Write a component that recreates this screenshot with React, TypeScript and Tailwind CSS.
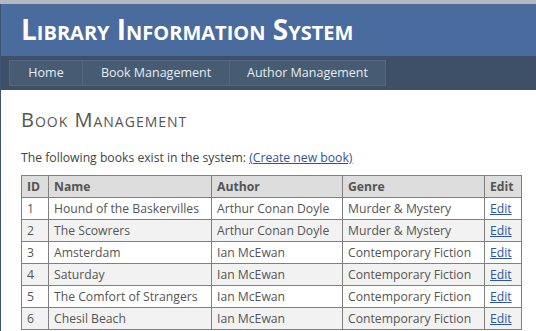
import React from "react";

const books = [
  { id: 1, name: "Hound of the Baskervilles", author: "Arthur Conan Doyle", genre: "Murder & Mystery" },
  { id: 2, name: "The Scowrers", author: "Arthur Conan Doyle", genre: "Murder & Mystery" },
  { id: 3, name: "Amsterdam", author: "Ian McEwan", genre: "Contemporary Fiction" },
  { id: 4, name: "Saturday", author: "Ian McEwan", genre: "Contemporary Fiction" },
  { id: 5, name: "The Comfort of Strangers", author: "Ian McEwan", genre: "Contemporary Fiction" },
  { id: 6, name: "Chesil Beach", author: "Ian McEwan", genre: "Contemporary Fiction" },
];

const cell = "border border-[#808080] px-[5px] py-0 whitespace-nowrap overflow-hidden";

export default function App() {
  return (
    <div className="w-[536px] h-[331px] overflow-hidden bg-[#b5b8bc] pt-[4px] font-['Open_Sans',sans-serif]">
      <div className="h-full border-l border-[#3b5573] bg-white">
        <header className="h-[52px] bg-[#4a6b9d] pl-[20px] flex items-center">
          <h1 className="text-white font-bold text-[28px] leading-none [font-variant:small-caps] tracking-[0px] pb-[2px] whitespace-nowrap">
            Library Information System
          </h1>
        </header>
        <nav className="h-[34px] bg-[#3d5068] pt-[4px] pl-[8px]">
          <ul className="flex h-[26px]">
            <li className="w-[74px] h-full bg-[#475c72] border border-[#526780] flex items-center justify-center text-[#e6ecf3] text-[12.5px]">Home</li>
            <li className="w-[147px] h-full bg-[#475c72] border border-l-0 border-[#526780] flex items-center justify-center text-[#e6ecf3] text-[12.5px]">Book Management</li>
            <li className="w-[156px] h-full bg-[#475c72] border border-l-0 border-[#526780] flex items-center justify-center text-[#e6ecf3] text-[12.5px]">Author Management</li>
          </ul>
        </nav>
        <main className="pl-[20px] pt-[20px]">
          <h2 className="text-[#555] text-[20px] leading-none [font-variant:small-caps] font-normal tracking-[1px] whitespace-nowrap">Book Management</h2>
          <p className="mt-[22px] text-[12.2px] text-[#444] leading-none whitespace-nowrap">
            The following books exist in the system:{" "}
            <a className="text-[#2b54a8] underline" href="#">(Create new book)</a>
          </p>
          <table className="mt-[11px] border-collapse table-fixed w-[500px] text-[12.2px] text-[#555] border border-[#808080]">
            <colgroup>
              <col className="w-[27px]" />
              <col className="w-[163px]" />
              <col className="w-[131px]" />
              <col className="w-[142px]" />
              <col className="w-[37px]" />
            </colgroup>
            <thead>
              <tr className="bg-[#dddddd] h-[22px]">
                <th className={`${cell} text-left font-bold`}>ID</th>
                <th className={`${cell} text-left font-bold`}>Name</th>
                <th className={`${cell} text-left font-bold`}>Author</th>
                <th className={`${cell} text-left font-bold`}>Genre</th>
                <th className={`${cell} text-left font-bold`}>Edit</th>
              </tr>
            </thead>
            <tbody>
              {books.map((b, i) => (
                <tr key={b.id} className={`h-[22px] ${i % 2 === 1 ? "bg-[#f2f2f2]" : "bg-white"}`}>
                  <td className={cell}>{b.id}</td>
                  <td className={cell}>{b.name}</td>
                  <td className={cell}>{b.author}</td>
                  <td className={cell}>{b.genre}</td>
                  <td className={cell}>
                    <a className="text-[#2b54a8] underline" href="#">Edit</a>
                  </td>
                </tr>
              ))}
            </tbody>
          </table>
        </main>
      </div>
    </div>
  );
}
